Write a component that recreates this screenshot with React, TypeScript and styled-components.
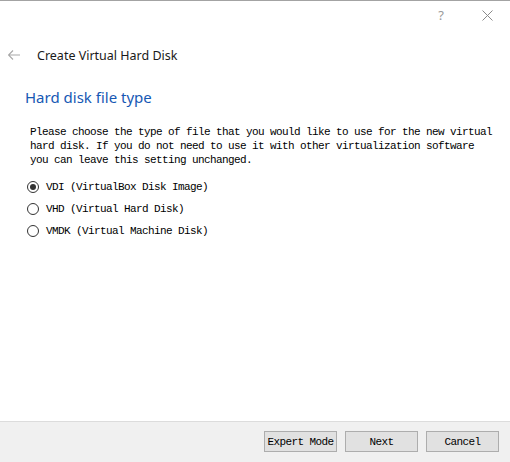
import React from "react";
import styled, { createGlobalStyle } from "styled-components";

const Global = createGlobalStyle`
  html, body { margin: 0; padding: 0; background: #ffffff; }
  * { box-sizing: border-box; }
`;

const mono = `"Liberation Mono", "DejaVu Sans Mono", monospace`;
const ui = `"Noto Sans", "Open Sans", sans-serif`;

const Window = styled.div`
  width: 510px;
  height: 462px;
  border-top: 1px solid #a3a3a3;
  background: #ffffff;
  display: flex;
  flex-direction: column;
`;

const TopBar = styled.div`
  height: 29px;
  display: flex;
  justify-content: flex-end;
  align-items: center;
  padding-right: 17px;
  gap: 38px;
`;

const Help = styled.span`
  font-family: ${ui};
  font-size: 13px;
  color: #9a9a9a;
  line-height: 1;
`;

const Header = styled.div`
  margin-top: 15px;
  height: 20px;
  display: flex;
  align-items: center;
  padding-left: 8px;
  gap: 17px;
`;

const HeaderTitle = styled.span`
  font-family: ${ui};
  font-size: 12.5px;
  color: #1a1a1a;
`;

const Content = styled.div`
  flex: 1;
  display: flex;
  flex-direction: column;
`;

const PageTitle = styled.h1`
  margin: 22px 0 0 25px;
  font-family: ${ui};
  font-weight: normal;
  font-size: 15px;
  line-height: 20px;
  color: #1658b4;
`;

const Paragraph = styled.p`
  margin: 18px 0 0 30px;
  font-family: ${mono};
  font-size: 11px;
  letter-spacing: -0.6px;
  line-height: 14px;
  color: #000;
  white-space: pre;
`;

const RadioList = styled.div`
  margin: 9px 0 0 27px;
  display: flex;
  flex-direction: column;
`;

const RadioRow = styled.label`
  height: 22px;
  display: flex;
  align-items: center;
  gap: 7px;
  font-family: ${mono};
  font-size: 11px;
  line-height: 14px;
  letter-spacing: -0.6px;
  color: #000;
`;

const RadioCircle = styled.span<{ $checked?: boolean }>`
  width: 12px;
  height: 12px;
  border-radius: 50%;
  border: 1px solid #333333;
  background: #ffffff;
  display: flex;
  align-items: center;
  justify-content: center;
  &::after {
    content: "";
    width: 6px;
    height: 6px;
    border-radius: 50%;
    background: ${(p) => (p.$checked ? "#333333" : "transparent")};
  }
`;

const Footer = styled.div`
  height: 41px;
  border-top: 1px solid #dcdcdc;
  background: #f0f0f0;
  display: flex;
  justify-content: flex-end;
  align-items: flex-start;
  padding: 9px 11px 0 0;
  gap: 8px;
`;

const Button = styled.button`
  width: 73px;
  height: 21px;
  padding: 0;
  border: 1px solid #adadad;
  background: #e1e1e1;
  font-family: ${mono};
  font-size: 11px;
  letter-spacing: -0.6px;
  color: #000;
`;

const Radio = ({ checked, label }: { checked?: boolean; label: string }) => (
  <RadioRow>
    <RadioCircle $checked={checked} />
    <span>{label}</span>
  </RadioRow>
);

export default function App() {
  return (
    <>
      <Global />
      <Window>
        <TopBar>
          <Help>?</Help>
          <svg width="11" height="11" viewBox="0 0 11 11">
            <path d="M0.5 0.5 L10.5 10.5 M10.5 0.5 L0.5 10.5" stroke="#8a8a8a" strokeWidth="1" fill="none" />
          </svg>
        </TopBar>
        <Header>
          <svg width="12" height="10" viewBox="0 0 12 10">
            <path d="M0.5 5 H12 M5 0.5 L0.5 5 L5 9.5" stroke="#a8a8a8" strokeWidth="1.1" fill="none" />
          </svg>
          <HeaderTitle>Create Virtual Hard Disk</HeaderTitle>
        </Header>
        <Content>
          <PageTitle>Hard disk file type</PageTitle>
          <Paragraph>
            {"Please choose the type of file that you would like to use for the new virtual\nhard disk. If you do not need to use it with other virtualization software\nyou can leave this setting unchanged."}
          </Paragraph>
          <RadioList>
            <Radio checked label="VDI (VirtualBox Disk Image)" />
            <Radio label="VHD (Virtual Hard Disk)" />
            <Radio label="VMDK (Virtual Machine Disk)" />
          </RadioList>
        </Content>
        <Footer>
          <Button>Expert Mode</Button>
          <Button>Next</Button>
          <Button>Cancel</Button>
        </Footer>
      </Window>
    </>
  );
}
